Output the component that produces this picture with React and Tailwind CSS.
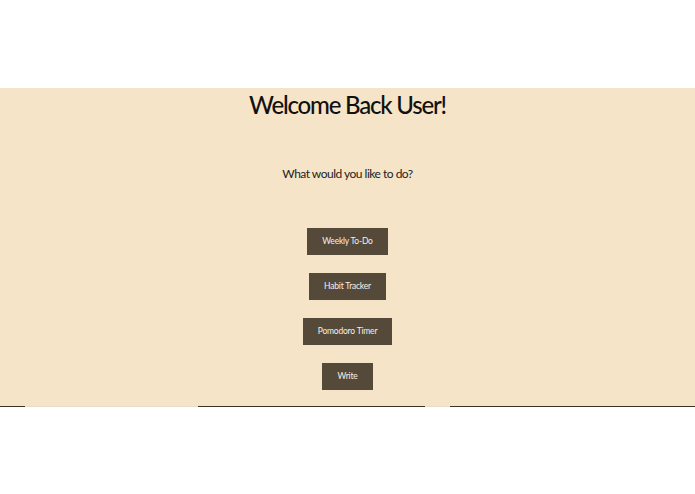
import React from "react";

const buttons = ["Weekly To-Do", "Habit Tracker", "Pomodoro Timer", "Write"];

export default function App() {
  return (
    <div className="w-[695px] h-[494px] bg-white" style={{ fontFamily: "Lato, 'Noto Sans', sans-serif" }}>
      <div className="h-[88px]" />
      <main className="h-[318px] bg-[#f6e4c8] flex flex-col items-center">
        <h1 className="text-[24px] leading-[34px] font-medium text-[#111] tracking-[-1.2px]">
          Welcome Back User!
        </h1>
        <p className="mt-[43px] text-[12px] leading-[18px] text-[#222] tracking-[-0.5px]">
          What would you like to do?
        </p>
        <div className="mt-[45px] flex flex-col items-center gap-[18px]">
          {buttons.map((b) => (
            <button
              key={b}
              className="h-[27px] px-[15px] bg-[#55493a] text-[#f5efe6] text-[8.5px] leading-none tracking-[-0.2px]"
            >
              {b}
            </button>
          ))}
        </div>
      </main>
      <div className="flex h-[1px]">
        <div className="w-[25px] bg-[#3a3128]" />
        <div className="w-[173px] bg-[#e8dccb]" />
        <div className="w-[227px] bg-[#3a3128]" />
        <div className="w-[25px] bg-[#e8dccb]" />
        <div className="flex-1 bg-[#3a3128]" />
      </div>
    </div>
  );
}
